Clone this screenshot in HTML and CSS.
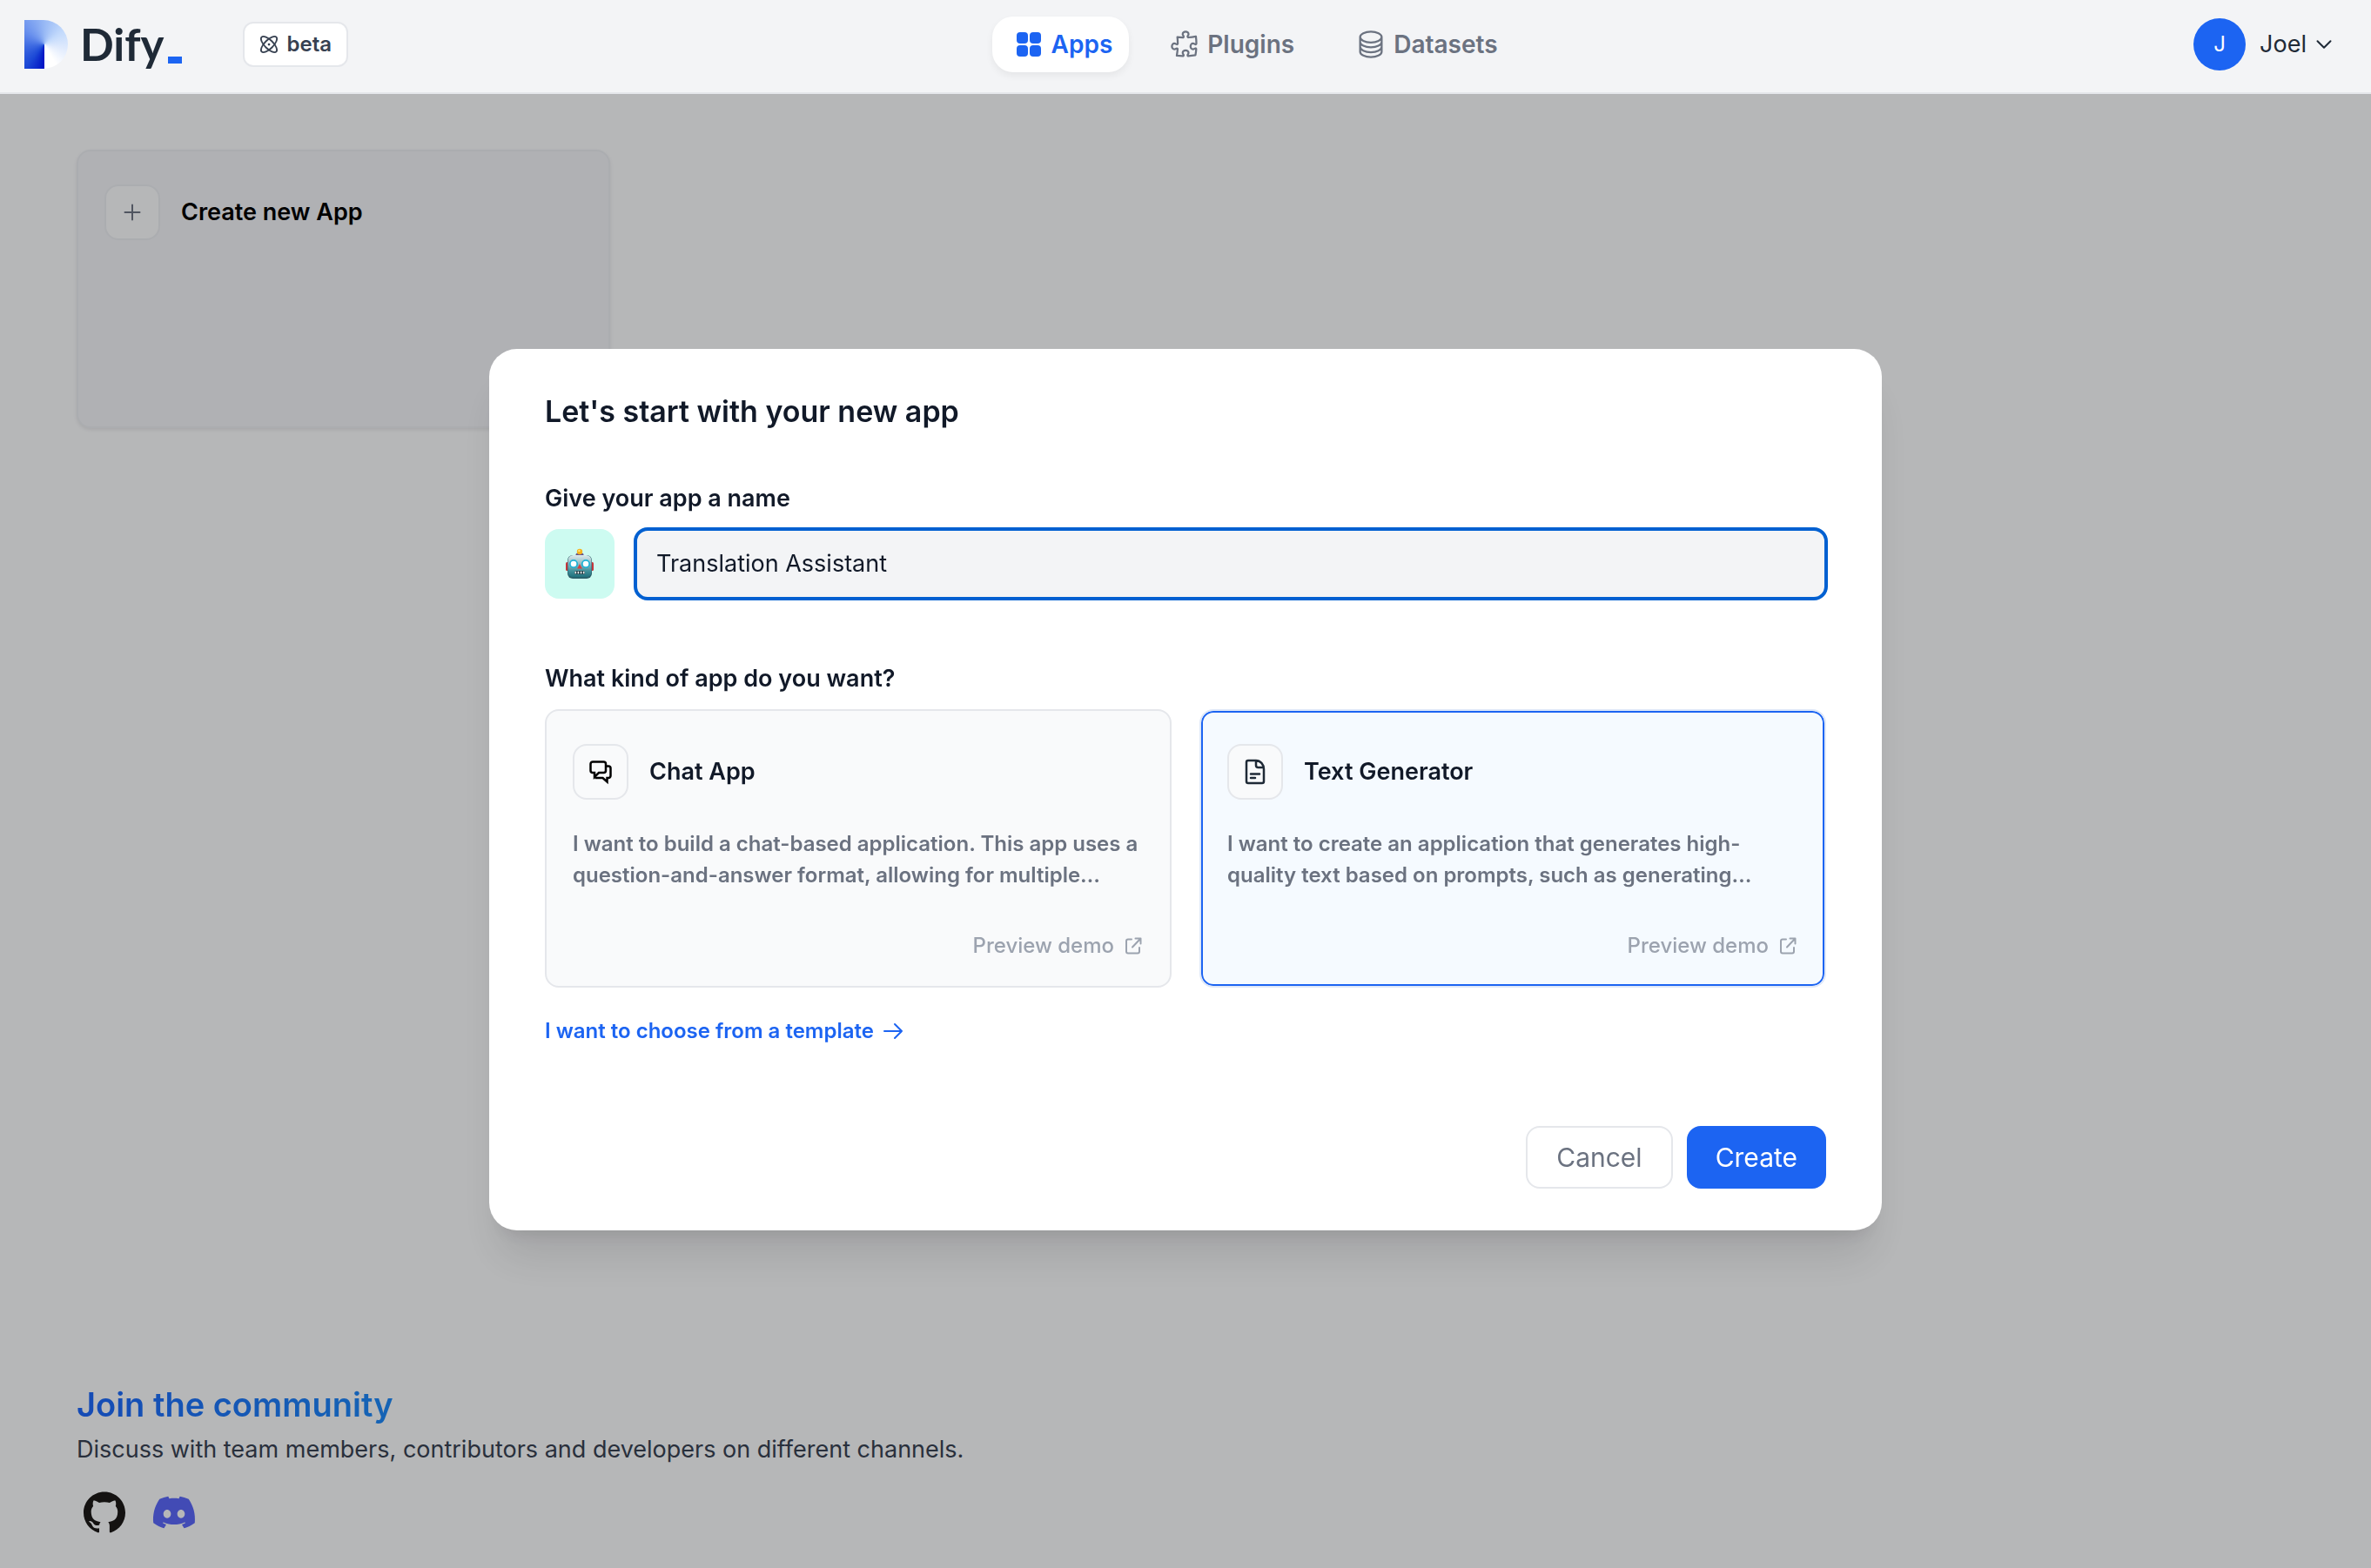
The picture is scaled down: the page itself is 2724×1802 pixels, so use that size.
FILE: index.html
```html
<!DOCTYPE html>
<html lang="en">
<head>
  <meta charset="utf-8">
  <meta name="viewport" content="width=device-width, initial-scale=1">
  <title>Apps - Dify</title>
  <link rel="stylesheet" href="styles.css">
</head>
<body>
  <header class="header">
    <div class="header-brand">
      <a class="logo" href="#" aria-label="Dify">
        <span class="logo-mark"></span>
        <span class="logo-word">Dify</span>
        <span class="logo-cursor"></span>
      </a>
      <span class="badge">
        <svg width="22" height="22" viewBox="0 0 24 24" fill="none" stroke="currentColor" stroke-width="2">
          <ellipse cx="12" cy="12" rx="13" ry="5.4" transform="rotate(45 12 12)"/>
          <ellipse cx="12" cy="12" rx="13" ry="5.4" transform="rotate(-45 12 12)"/>
          <circle cx="12" cy="12" r="1.5" fill="currentColor" stroke="none"/>
        </svg>
        beta
      </span>
    </div>
    <nav class="nav">
      <a class="nav-item nav-item-active" href="#">
        <svg width="36" height="36" viewBox="0 0 36 36" fill="currentColor">
          <rect x="4" y="4" width="13" height="13" rx="4"/>
          <rect x="19" y="4" width="13" height="13" rx="4"/>
          <rect x="4" y="19" width="13" height="13" rx="4"/>
          <rect x="19" y="19" width="13" height="13" rx="4"/>
        </svg>
        Apps
      </a>
      <a class="nav-item" href="#">
        <svg width="36" height="36" viewBox="0 0 24 24" fill="none" stroke="currentColor" stroke-width="1.5" stroke-linecap="round" stroke-linejoin="round">
          <path d="M14.25 6.087c0-.355.186-.676.401-.959.221-.29.349-.634.349-1.003 0-1.036-1.007-1.875-2.25-1.875s-2.25.84-2.25 1.875c0 .369.128.713.349 1.003.215.283.401.604.401.959v0a.64.64 0 01-.657.643 48.39 48.39 0 01-4.163-.3c.186 1.613.293 3.25.315 4.907a.656.656 0 01-.658.663v0c-.355 0-.676-.186-.959-.401a1.647 1.647 0 00-1.003-.349c-1.036 0-1.875 1.007-1.875 2.25s.84 2.25 1.875 2.25c.369 0 .713-.128 1.003-.349.283-.215.604-.401.959-.401v0c.31 0 .555.26.532.57a48.039 48.039 0 01-.642 5.056c1.518.19 3.058.309 4.616.354a.64.64 0 00.657-.643v0c0-.355-.186-.676-.401-.959a1.647 1.647 0 01-.349-1.003c0-1.035 1.008-1.875 2.25-1.875 1.243 0 2.25.84 2.25 1.875 0 .369-.128.713-.349 1.003-.215.283-.4.604-.4.959v0c0 .333.277.599.61.58a48.1 48.1 0 005.427-.63 48.05 48.05 0 00.582-4.717.532.532 0 00-.533-.57v0c-.355 0-.676.186-.959.401-.29.221-.634.349-1.003.349-1.035 0-1.875-1.007-1.875-2.25s.84-2.25 1.875-2.25c.37 0 .713.128 1.003.349.283.215.604.401.96.401v0a.656.656 0 00.658-.663 48.422 48.422 0 00-.37-5.36c-1.886.342-3.81.574-5.766.689a.578.578 0 01-.61-.58v0z"/>
        </svg>
        Plugins
      </a>
      <a class="nav-item" href="#">
        <svg width="36" height="36" viewBox="0 0 24 24" fill="none" stroke="currentColor" stroke-width="1.5" stroke-linecap="round" stroke-linejoin="round">
          <path d="M20.25 6.375c0 2.278-3.694 4.125-8.25 4.125S3.75 8.653 3.75 6.375m16.5 0c0-2.278-3.694-4.125-8.25-4.125S3.75 4.097 3.75 6.375m16.5 0v11.25c0 2.278-3.694 4.125-8.25 4.125s-8.25-1.847-8.25-4.125V6.375m16.5 0v3.75m-16.5-3.75v3.75m16.5 0v3.75C20.25 16.153 16.556 18 12 18s-8.25-1.847-8.25-4.125v-3.75m16.5 0c0 2.278-3.694 4.125-8.25 4.125s-8.25-1.847-8.25-4.125"/>
        </svg>
        Datasets
      </a>
    </nav>
    <button class="account" type="button">
      <span class="avatar">J</span>
      Joel
      <svg class="account-chevron" width="24" height="24" viewBox="0 0 24 24" fill="none" stroke="currentColor" stroke-width="2" stroke-linecap="round" stroke-linejoin="round">
        <path d="M4.5 8.25l7.5 7.5 7.5-7.5"/>
      </svg>
    </button>
  </header>

  <main class="apps">
    <button class="card create-card" type="button">
      <span class="card-head">
        <span class="icon-tile">
          <svg width="20" height="20" viewBox="0 0 20 20" fill="none" stroke="currentColor" stroke-width="2" stroke-linecap="round">
            <path d="M10 1.5v17M1.5 10h17"/>
          </svg>
        </span>
        <span class="card-title">Create new App</span>
      </span>
    </button>
  </main>

  <footer class="footer">
    <h2 class="footer-title">Join the community</h2>
    <p class="footer-text">Discuss with team members, contributors and developers on different channels.</p>
    <div class="footer-links">
      <a class="footer-link github" href="#" aria-label="GitHub">
        <svg width="48" height="48" viewBox="0 0 24 24" fill="currentColor">
          <path d="M12 .297c-6.63 0-12 5.373-12 12 0 5.303 3.438 9.8 8.205 11.385.6.113.82-.258.82-.577 0-.285-.01-1.04-.015-2.04-3.338.724-4.042-1.61-4.042-1.61C4.422 18.07 3.633 17.7 3.633 17.7c-1.087-.744.084-.729.084-.729 1.205.084 1.838 1.236 1.838 1.236 1.07 1.835 2.809 1.305 3.495.998.108-.776.417-1.305.76-1.605-2.665-.3-5.466-1.332-5.466-5.93 0-1.31.465-2.38 1.235-3.22-.135-.303-.54-1.523.105-3.176 0 0 1.005-.322 3.3 1.23.96-.267 1.98-.399 3-.405 1.02.006 2.04.138 3 .405 2.28-1.552 3.285-1.23 3.285-1.23.645 1.653.24 2.873.12 3.176.765.84 1.23 1.91 1.23 3.22 0 4.61-2.805 5.625-5.475 5.92.42.36.81 1.096.81 2.22 0 1.606-.015 2.896-.015 3.286 0 .315.21.69.825.57C20.565 22.092 24 17.592 24 12.297c0-6.627-5.373-12-12-12"/>
        </svg>
      </a>
      <a class="footer-link discord" href="#" aria-label="Discord">
        <svg width="48" height="48" viewBox="0 0 24 24" fill="currentColor">
          <path d="M20.317 4.3698a19.7913 19.7913 0 00-4.8851-1.5152.0741.0741 0 00-.0785.0371c-.211.3753-.4447.8648-.6083 1.2495-1.8447-.2762-3.68-.2762-5.4868 0-.1636-.3933-.4058-.8742-.6177-1.2495a.077.077 0 00-.0785-.037 19.7363 19.7363 0 00-4.8852 1.515.0699.0699 0 00-.0321.0277C.5334 9.0458-.319 13.5799.0992 18.0578a.0824.0824 0 00.0312.0561c2.0528 1.5076 4.0413 2.4228 5.9929 3.0294a.0777.0777 0 00.0842-.0276c.4616-.6304.8731-1.2952 1.226-1.9942a.076.076 0 00-.0416-.1057c-.6528-.2476-1.2743-.5495-1.8722-.8923a.077.077 0 01-.0076-.1277c.1258-.0943.2517-.1923.3718-.2914a.0743.0743 0 01.0776-.0105c3.9278 1.7933 8.18 1.7933 12.0614 0a.0739.0739 0 01.0785.0095c.1202.099.246.1981.3728.2924a.077.077 0 01-.0066.1276 12.2986 12.2986 0 01-1.873.8914.0766.0766 0 00-.0407.1067c.3604.698.7719 1.3628 1.225 1.9932a.076.076 0 00.0842.0286c1.961-.6067 3.9495-1.5219 6.0023-3.0294a.077.077 0 00.0313-.0552c.5004-5.177-.8382-9.6739-3.5485-13.6604a.061.061 0 00-.0312-.0286zM8.02 15.3312c-1.1825 0-2.1569-1.0857-2.1569-2.419 0-1.3332.9555-2.4189 2.157-2.4189 1.2108 0 2.1757 1.0952 2.1568 2.419 0 1.3332-.9555 2.4189-2.1569 2.4189zm7.9748 0c-1.1825 0-2.1569-1.0857-2.1569-2.419 0-1.3332.9554-2.4189 2.1569-2.4189 1.2108 0 2.1757 1.0952 2.1568 2.419 0 1.3332-.946 2.4189-2.1568 2.4189Z"/>
        </svg>
      </a>
    </div>
  </footer>

  <div class="overlay">
    <form class="modal" role="dialog" aria-labelledby="modal-title">
      <h1 class="modal-title" id="modal-title">Let's start with your new app</h1>

      <label class="modal-label" for="app-name">Give your app a name</label>
      <div class="name-row">
        <button class="emoji-button" type="button" aria-label="Choose an icon">
          <svg width="34" height="36" viewBox="0 0 34 36">
            <defs>
              <linearGradient id="robot-face" x1="0" y1="0" x2="0" y2="1">
                <stop offset="0" stop-color="#dcebed"/>
                <stop offset="0.4" stop-color="#8fb9c0"/>
                <stop offset="0.7" stop-color="#43929c"/>
                <stop offset="1" stop-color="#1f6f7b"/>
              </linearGradient>
            </defs>
            <rect x="1" y="16" width="4" height="10" rx="1.5" fill="#c4353b"/>
            <rect x="29" y="16" width="4" height="10" rx="1.5" fill="#c4353b"/>
            <ellipse cx="17" cy="7.5" rx="4.5" ry="2.2" fill="#65528b"/>
            <circle cx="17" cy="4" r="3.2" fill="#f6b21b"/>
            <circle cx="16.4" cy="3" r="1.2" fill="#ffe27a"/>
            <rect x="3" y="8" width="28" height="27" rx="6" fill="#2b5c66"/>
            <rect x="3.5" y="8" width="27" height="25.5" rx="6" fill="url(#robot-face)"/>
            <circle cx="10" cy="18" r="4.2" fill="#fff" stroke="#1fb2d6" stroke-width="1.8"/>
            <circle cx="24" cy="18" r="4.2" fill="#fff" stroke="#1fb2d6" stroke-width="1.8"/>
            <path d="M17 18l2.8 5.5h-5.6z" fill="#d63f3f"/>
            <rect x="11" y="26" width="12" height="4" rx="1.5" fill="#23414a"/>
            <path d="M12.3 26.8v2.4M15.4 26.8v2.4M18.6 26.8v2.4M21.7 26.8v2.4" stroke="#fff" stroke-width="1.5"/>
          </svg>
        </button>
        <input class="name-input" id="app-name" type="text" value="Translation Assistant">
      </div>

      <fieldset class="kinds">
        <legend class="modal-label">What kind of app do you want?</legend>
        <div class="kind-grid">
          <label class="card kind-card">
            <input class="kind-radio" type="radio" name="kind" value="chat">
            <span class="card-head">
              <span class="icon-tile icon-tile-black">
                <svg width="28" height="28" viewBox="0 0 28 28" fill="none" stroke="currentColor" stroke-width="2.5">
                  <path d="M5 2.5h12.500a2.500 2.500 0 0 1 2.500 2.500v7.500a2.500 2.500 0 0 1-2.500 2.500h-5.500l-5 5v-5h-2a2.500 2.500 0 0 1-2.500-2.500v-7.500a2.500 2.500 0 0 1 2.500-2.500z"/>
                  <path d="M20 7.500h3a2.500 2.500 0 0 1 2.500 2.500v8.500a2.500 2.500 0 0 1-2.500 2.500h-1.500v4.500l-5-4.500h-9"/>
                </svg>
              </span>
              <span class="card-title">Chat App</span>
            </span>
            <span class="card-text">I want to build a chat-based application. This app uses a question-and-answer format, allowing for multiple…</span>
            <a class="card-link" href="#">Preview demo
              <svg width="24" height="24" viewBox="0 0 24 24" fill="none" stroke="currentColor" stroke-width="2" stroke-linecap="round" stroke-linejoin="round">
                <path d="M10 4.500H6a2 2 0 0 0-2 2v12a2 2 0 0 0 2 2h11a2 2 0 0 0 2-2v-4.500M14.500 3.500h6v6M20 4l-9 9.500"/>
              </svg>
            </a>
          </label>
          <label class="card kind-card kind-card-selected">
            <input class="kind-radio" type="radio" name="kind" value="text" checked>
            <span class="card-head">
              <span class="icon-tile">
                <svg width="32" height="32" viewBox="0 0 32 32" fill="none" stroke="currentColor" stroke-width="2.5" stroke-linecap="round" stroke-linejoin="round">
                  <path d="M17 3H8a2 2 0 0 0-2 2v22a2 2 0 0 0 2 2h16a2 2 0 0 0 2-2V13C26 7.500 22 3 17 3zM17 3v5.500a2.500 2.500 0 0 0 2.500 2.500h5.500M11 18.500h10M11 23h5"/>
                </svg>
              </span>
              <span class="card-title">Text Generator</span>
            </span>
            <span class="card-text">I want to create an application that generates high-quality text based on prompts, such as generating…</span>
            <a class="card-link" href="#">Preview demo
              <svg width="24" height="24" viewBox="0 0 24 24" fill="none" stroke="currentColor" stroke-width="2" stroke-linecap="round" stroke-linejoin="round">
                <path d="M10 4.500H6a2 2 0 0 0-2 2v12a2 2 0 0 0 2 2h11a2 2 0 0 0 2-2v-4.500M14.500 3.500h6v6M20 4l-9 9.500"/>
              </svg>
            </a>
          </label>
        </div>
      </fieldset>

      <a class="template-link" href="#">I want to choose from a template
        <svg width="24" height="24" viewBox="0 0 24 24" fill="none" stroke="currentColor" stroke-width="2" stroke-linecap="round" stroke-linejoin="round">
          <path d="M2 12h20M14 4l8 8-8 8"/>
        </svg>
      </a>

      <div class="actions">
        <button class="button" type="button">Cancel</button>
        <button class="button button-primary" type="submit">Create</button>
      </div>
    </form>
  </div>
</body>
</html>
```

FILE: styles.css
```css
:root {
  --blue: #1c64f2;
  --gray-50: #f9fafb;
  --gray-100: #f3f4f6;
  --gray-200: #e5e7eb;
  --gray-400: #9ca3af;
  --gray-500: #6b7280;
  --gray-700: #374151;
  --gray-800: #1f2a37;
  --gray-900: #111928;
}

* {
  box-sizing: border-box;
}

body {
  display: flex;
  flex-direction: column;
  min-height: 100vh;
  margin: 0;
  background: var(--gray-100);
  color: var(--gray-900);
  font: 27px/40px Inter, "Liberation Sans", sans-serif;
}

button,
input {
  font: inherit;
  color: inherit;
}

button {
  cursor: pointer;
}

a {
  color: inherit;
  text-decoration: none;
}

svg {
  display: block;
  flex: none;
  overflow: visible;
}

/* Header */

.header {
  position: relative;
  z-index: 2;
  display: flex;
  align-items: center;
  justify-content: space-between;
  padding: 19px 42px 23px 28px;
  border-bottom: 2px solid var(--gray-200);
  background: var(--gray-100);
}

.header-brand {
  display: flex;
  align-items: center;
  gap: 70px;
}

.logo {
  display: flex;
  align-items: center;
}

.logo-mark {
  width: 50px;
  height: 56px;
  border-radius: 0 28px 28px 0;
  background: conic-gradient(from 180deg at 23px 28px, #0012c4 0deg, #1c49d6 40deg, #3f6be2 85deg, #6c93ee 130deg, #98b9f5 180deg, #c3dafc 235deg, #dfeafd 280deg, #ffffff 330deg, #ffffff 360deg);
}

.logo-word {
  margin-left: 14px;
  color: var(--gray-800);
  font: 700 51px/56px Lato, "Liberation Sans", sans-serif;
}

.logo-cursor {
  align-self: flex-end;
  width: 16px;
  height: 8px;
  margin: 0 0 6px 4px;
  background: var(--blue);
}

.badge {
  display: flex;
  align-items: center;
  gap: 10px;
  padding: 6px 17px;
  border: 2px solid var(--gray-200);
  border-radius: 12px;
  background: #fff;
  color: var(--gray-700);
  font-size: 24px;
  font-weight: 600;
  line-height: 36px;
}

.nav {
  display: flex;
  gap: 22px;
}

.nav-item {
  display: flex;
  align-items: center;
  gap: 8px;
  padding: 12px 24px;
  border-radius: 24px;
  color: var(--gray-500);
  font-size: 28px;
  font-weight: 600;
}

.nav-item-active {
  padding-right: 19px;
  background: #fff;
  color: var(--blue);
  box-shadow: 0 4px 8px rgba(0, 0, 0, 0.06);
}

.account {
  display: flex;
  align-items: center;
  padding: 0 0 0 36px;
  border: 0;
  background: none;
  color: var(--gray-800);
}

.avatar {
  width: 60px;
  height: 60px;
  margin-right: 16px;
  border-radius: 50%;
  background: var(--blue);
  color: #fff;
  font-size: 24px;
  line-height: 60px;
}

.account-chevron {
  margin-left: 8px;
}

/* Cards */

.apps {
  display: grid;
  grid-template-columns: repeat(4, 1fr);
  gap: 32px;
  padding: 64px 88px;
}

.card {
  display: flex;
  flex-direction: column;
  min-height: 320px;
  padding: 38px 30px 28px;
  border: 2px solid var(--gray-200);
  border-radius: 16px;
  text-align: left;
}

.create-card {
  background: #ebecf1;
  color: #000;
  box-shadow: 0 2px 4px rgba(0, 0, 0, 0.08);
}

.card-head {
  display: flex;
  align-items: center;
  gap: 24px;
}

.icon-tile {
  display: grid;
  place-items: center;
  width: 64px;
  height: 64px;
  border: 2px solid var(--gray-200);
  border-radius: 16px;
  background: var(--gray-50);
  color: var(--gray-800);
}

.icon-tile-black {
  color: #000;
}

.create-card .icon-tile {
  background: var(--gray-100);
  color: var(--gray-500);
}

.card-title {
  font-weight: 600;
}

.card-text {
  margin-top: 33px;
  color: var(--gray-500);
  font-size: 24px;
  font-weight: 600;
  line-height: 36px;
}

.card-link {
  display: flex;
  align-items: center;
  gap: 10px;
  align-self: flex-end;
  margin-top: auto;
  color: var(--gray-400);
  font-size: 24px;
  font-weight: 500;
  line-height: 36px;
}

/* Footer */

.footer {
  display: flex;
  flex-direction: column;
  align-items: flex-start;
  margin-top: auto;
  padding: 0 88px 32px;
}

.footer-title {
  margin: 0;
  background: linear-gradient(90deg, #1c64f2, #1c86f2);
  background-clip: text;
  -webkit-background-clip: text;
  color: transparent;
  font-size: 38px;
  font-weight: 600;
  line-height: 48px;
}

.footer-text {
  margin: 8px 0 0;
  color: var(--gray-700);
}

.footer-links {
  display: flex;
  gap: 32px;
  padding: 28px 8px 8px;
}

.github {
  color: #1b1817;
}

.discord {
  color: #5865f2;
}

/* New app dialog */

.overlay {
  position: fixed;
  inset: 0;
  z-index: 1;
  display: grid;
  place-items: center;
  padding-top: 12px;
  background: rgba(0, 0, 0, 0.25);
}

.modal {
  width: 1600px;
  max-width: 100%;
  padding: 48px 64px;
  border-radius: 32px;
  background: #fff;
  box-shadow: 0 40px 50px -10px rgba(0, 0, 0, 0.1), 0 16px 20px -12px rgba(0, 0, 0, 0.1);
}

.modal-title {
  margin: 0 0 56px;
  font-size: 34px;
  font-weight: 600;
  line-height: 48px;
}

.modal-label {
  display: block;
  margin-bottom: 15px;
  padding: 0;
  font-weight: 600;
}

.name-row {
  display: flex;
  gap: 24px;
}

.emoji-button {
  display: grid;
  place-items: center;
  width: 80px;
  height: 80px;
  padding: 0;
  border: 0;
  border-radius: 16px;
  background: #cdfbf1;
}

.name-input {
  flex: 1;
  min-width: 0;
  height: 80px;
  padding: 0 24px;
  border: 0;
  border-radius: 14px;
  outline: 4px solid #0060d1;
  outline-offset: -2px;
  background: var(--gray-100);
}

.kinds {
  margin: 72px 0 0;
  padding: 0;
  border: 0;
}

.kind-grid {
  display: grid;
  grid-template-columns: 1fr 1fr;
  gap: 32px;
}

.kind-card {
  position: relative;
  background: var(--gray-50);
  cursor: pointer;
}

.kind-card-selected {
  border-color: #dfe8f8;
  background: #f5faff;
  box-shadow: inset 0 0 0 2px var(--blue);
}

.kind-radio {
  position: absolute;
  margin: 0;
  opacity: 0;
}

.template-link {
  display: inline-flex;
  align-items: center;
  gap: 10px;
  margin-top: 32px;
  color: var(--blue);
  font-size: 24px;
  font-weight: 600;
  line-height: 36px;
  vertical-align: top;
}

.actions {
  display: flex;
  justify-content: flex-end;
  gap: 16px;
  margin-top: 91px;
}

.button {
  padding: 14px 33px;
  border: 2px solid var(--gray-200);
  border-radius: 16px;
  background: #fff;
  color: var(--gray-500);
  font-size: 30px;
  line-height: 40px;
}

.button-primary {
  padding: 14px 31px;
  border-color: var(--blue);
  background: var(--blue);
  color: #fff;
}
```
